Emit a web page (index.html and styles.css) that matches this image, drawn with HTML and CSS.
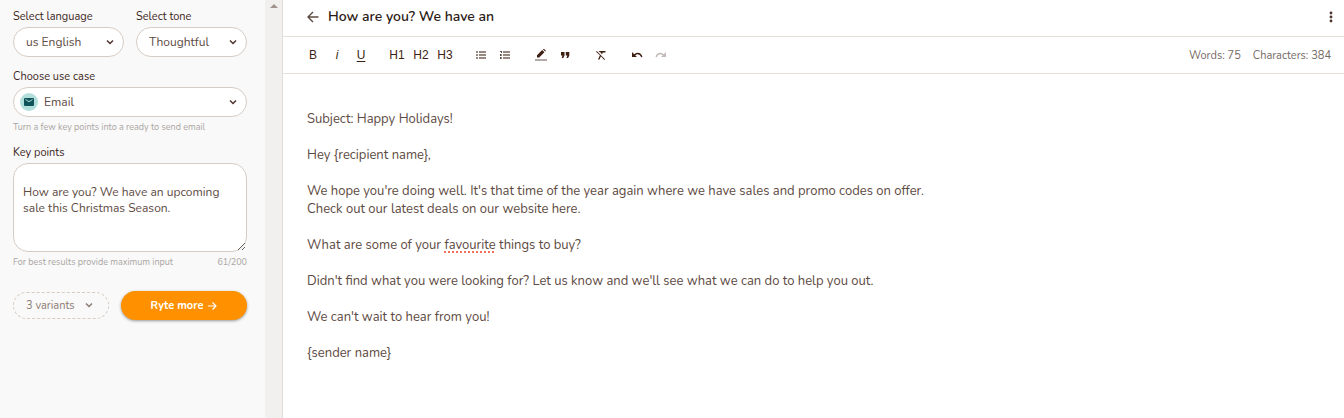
FILE: index.html
```
<!DOCTYPE html>
<html lang="en">
<head>
  <meta charset="UTF-8">
  <meta name="viewport" content="width=device-width, initial-scale=1">
  <title>How are you? We have an</title>
  <link rel="stylesheet" href="styles.css">
</head>
<body>

  <div class="app">
    <aside class="sidebar">
      <form class="panel">
        <div class="row">
          <div class="field">
            <label for="language">Select language</label>
            <div class="select-box">
              <select id="language"><option>us English</option></select>
              <svg class="chevron" viewBox="0 0 8 8"><path d="M1 2.5l3 3 3-3"/></svg>
            </div>
          </div>
          <div class="field">
            <label for="tone">Select tone</label>
            <div class="select-box">
              <select id="tone"><option>Thoughtful</option></select>
              <svg class="chevron" viewBox="0 0 8 8"><path d="M1 2.5l3 3 3-3"/></svg>
            </div>
          </div>
        </div>

        <div class="field">
          <label for="usecase">Choose use case</label>
          <div class="select-box with-icon">
            <svg class="mail" viewBox="0 0 18 18">
              <circle cx="9" cy="9" r="9" fill="#b2dfdb"/>
              <rect x="4" y="5" width="10" height="8" rx="1" fill="#0f5257"/>
              <path d="M5.5 6.5L9 8.7l3.5-2.2" fill="none" stroke="#b2dfdb"/>
            </svg>
            <select id="usecase"><option>Email</option></select>
            <svg class="chevron" viewBox="0 0 8 8"><path d="M1 2.5l3 3 3-3"/></svg>
          </div>
          <p class="hint">Turn a few key points into a ready to send email</p>
        </div>

        <div class="field">
          <label for="points">Key points</label>
          <textarea id="points" spellcheck="false">How are you? We have an upcoming sale this Christmas Season.</textarea>
          <p class="hint"><span>For best results provide maximum input</span><span>61/200</span></p>
        </div>

        <div class="actions">
          <div class="select-box variants">
            <select aria-label="Variants"><option>3 variants</option></select>
            <svg class="chevron" viewBox="0 0 8 8"><path d="M1 2.5l3 3 3-3"/></svg>
          </div>
          <button type="button" class="ryte">Ryte more
            <svg viewBox="0 0 10 10"><path d="M1 5h8M5.5 1.5L9 5 5.5 8.5"/></svg>
          </button>
        </div>
      </form>
      <div class="scrollbar"><span class="scroll-up"></span></div>
    </aside>

    <main class="document">
      <header class="doc-header">
        <button class="back" aria-label="Back">
          <svg viewBox="0 0 12 12"><path d="M11.5 6H1.5M6 1L1 6l5 5"/></svg>
        </button>
        <h1>How are you? We have an</h1>
        <button class="more" aria-label="More">
          <svg viewBox="0 0 4 12"><circle cx="2" cy="2" r="1.4"/><circle cx="2" cy="6" r="1.4"/><circle cx="2" cy="10" r="1.4"/></svg>
        </button>
      </header>

      <div class="toolbar">
        <div class="group">
          <button class="bold">B</button>
          <button class="italic">i</button>
          <button class="underline">U</button>
        </div>
        <div class="group">
          <button>H1</button>
          <button>H2</button>
          <button>H3</button>
        </div>
        <div class="group">
          <button aria-label="Bulleted list">
            <svg class="list" viewBox="0 0 12 12"><path d="M1 3h2M1 6h2M1 9h2M4 3h7M4 6h7M4 9h7"/></svg>
          </button>
          <button aria-label="Numbered list">
            <svg class="list" viewBox="0 0 12 12"><path d="M4 3h7M4 6h7M4 9h7M1 6h2M1 9h2"/><path class="dark" d="M1 2.5h1M2.5 2v2M1.500 5v2M1.500 8v2"/></svg>
          </button>
        </div>
        <div class="group">
          <button aria-label="Highlight">
            <svg viewBox="0 0 12 12"><path d="M2 8.5V6.3L7.2 1.1l2.2 2.2L4.200 8.500zM8 .4l.4-.4q.4-.4.8 0l1.400 1.400q.4.4 0 .8l-.4.4z"/><path class="swatch" d="M0 10h12v2H0z"/></svg>
          </button>
          <button aria-label="Quote">
            <svg viewBox="0 0 12 12"><path d="M2 3h3.500v3.500L4.300 9H2.700L3.500 6.500H2zM6.800 3h3.500v3.500L9.100 9H7.500l.8-2.500H6.800z"/></svg>
          </button>
        </div>
        <div class="group">
          <button aria-label="Clear formatting">
            <svg viewBox="0 0 12 12"><path d="M3.5 2h7v1.500H7.800L7 5.300 5.900 4.200l.3-.7H5.200zM1.700 2L10 10.300l-.7.700-3.400-3.700L4.500 10.500H3L4.900 6.300 1 2.700z"/></svg>
          </button>
        </div>
        <div class="group">
          <button aria-label="Undo">
            <svg viewBox="0 0 12 12"><path d="M1 3v5h5L4.200 6.200Q8 3.500 10.300 8.300l1.200-.4Q9 1.500 3.200 5.200z"/></svg>
          </button>
          <button aria-label="Redo" disabled>
            <svg viewBox="0 0 12 12"><path d="M11 3v5H6l1.800-1.800Q4 3.500 1.700 8.300L.5 7.900Q3 1.500 8.800 5.200z"/></svg>
          </button>
        </div>
        <div class="counts"><span>Words: 75</span><span>Characters: 384</span></div>
      </div>

      <article class="editor" contenteditable="true" spellcheck="false">
        <p>Subject: Happy Holidays!</p>
        <p>Hey {recipient name},</p>
        <p>We hope you're doing well. It's that time of the year again where we have sales and promo codes on offer.<br>Check out our latest deals on our website here.</p>
        <p>What are some of your <span class="misspelled">favourite</span> things to buy?</p>
        <p>Didn't find what you were looking for? Let us know and we'll see what we can do to help you out.</p>
        <p>We can't wait to hear from you!</p>
        <p>{sender name}</p>
      </article>
    </main>
  </div>

</body>
</html>
```
FILE: styles.css
```
* {
  box-sizing: border-box;
}

body {
  margin: 0;
  font-family: Nunito, "Open Sans", sans-serif;
  font-size: 12px;
  color: #5d4a42;
  background-color: #fff;
}

button,
select,
textarea {
  font: inherit;
  color: inherit;
}

button {
  border: none;
  padding: 0;
  background: none;
  cursor: pointer;
}

h1,
p {
  margin: 0;
}

.app {
  display: flex;
  min-height: 100vh;
}

/* sidebar */
.sidebar {
  display: flex;
  width: 283px;
  flex-shrink: 0;
  background-color: #f9f9f9;
  border-right: 1px solid #e0dcd8;
}

.panel {
  flex: 1;
  display: flex;
  flex-direction: column;
  gap: 10px;
  padding: 9px 18px 8px 13px;
}

.row {
  display: grid;
  grid-template-columns: 1fr 1fr;
  gap: 12px;
  margin-bottom: 2px;
}

label {
  display: block;
  font-size: 11px;
  line-height: 16px;
  margin-bottom: 2px;
  color: #3e2723;
}

.select-box {
  position: relative;
}

.select-box select {
  display: block;
  width: 100%;
  height: 30px;
  padding: 0 24px 0 12px;
  border: 1px solid #d7ccc3;
  border-radius: 15px;
  background-color: #fff;
  appearance: none;
}

.with-icon select {
  padding-left: 30px;
}

.chevron {
  position: absolute;
  right: 10px;
  top: 11px;
  width: 8px;
  height: 8px;
  fill: none;
  stroke: #4e342e;
  stroke-width: 1.5;
  pointer-events: none;
}

.mail {
  position: absolute;
  left: 7px;
  top: 6px;
  width: 18px;
  height: 18px;
}

.hint {
  display: flex;
  justify-content: space-between;
  margin-top: 2px;
  font-size: 9px;
  line-height: 16px;
  color: #aaa5a2;
}

textarea {
  display: block;
  width: 100%;
  height: 89px;
  padding: 20px 9px;
  line-height: 16px;
  border: 1px solid #d7ccc3;
  border-radius: 15px;
  background-color: #fff;
}

.actions {
  display: flex;
  align-items: center;
  gap: 12px;
  margin-top: 11px;
}

.variants {
  width: 96px;
}

.variants select {
  height: 27px;
  font-size: 11px;
  color: #8d7b74;
  background-color: transparent;
  border-style: dashed;
}

.variants .chevron {
  right: 16px;
  top: 9px;
  stroke: #8d7b74;
}

.ryte {
  flex: 1;
  display: flex;
  align-items: center;
  justify-content: center;
  gap: 4px;
  height: 29px;
  border-radius: 15px;
  background-color: #ff9100;
  color: #fff;
  font-size: 11px;
  font-weight: 700;
  box-shadow: 0 1px 3px rgba(0, 0, 0, 0.4);
}

.ryte svg {
  width: 10px;
  height: 10px;
  fill: none;
  stroke: #fff;
  stroke-width: 1.2;
}

.scrollbar {
  width: 17px;
  background-color: #f1f0ef;
}

.scroll-up {
  display: block;
  width: 8px;
  margin: 4px auto 0;
  border: 4px solid transparent;
  border-top: none;
  border-bottom-color: #a1938d;
}

/* document */
.document {
  flex: 1;
  min-width: 0;
}

.doc-header {
  display: flex;
  align-items: center;
  height: 37px;
  padding: 0 11px 2px 24px;
  border-bottom: 1px solid #e6e0da;
}

.doc-header h1 {
  flex: 1;
  margin-left: 9px;
  font-size: 14px;
  font-weight: 600;
  line-height: 18px;
  color: #2b1a15;
}

.back,
.more {
  display: flex;
}

.back svg {
  width: 12px;
  height: 12px;
  fill: none;
  stroke: #5d4a42;
  stroke-width: 1.4;
}

.more svg {
  width: 4px;
  height: 12px;
  fill: #4e342e;
}

.toolbar {
  display: flex;
  align-items: center;
  gap: 12px;
  height: 37px;
  padding: 0 13px 0 18px;
  border-bottom: 1px solid #e6e0da;
}

.group {
  display: flex;
}

.toolbar button {
  display: flex;
  align-items: center;
  justify-content: center;
  width: 24px;
  height: 24px;
  font-family: "Liberation Sans", Arial, sans-serif;
  font-size: 12px;
  color: #3e1f14;
}

.toolbar svg {
  width: 12px;
  height: 12px;
  fill: #3e1f14;
}

.toolbar .list {
  fill: none;
  stroke: #988a83;
  stroke-width: 2;
}

.toolbar .dark {
  stroke: #5d4a42;
  stroke-width: 1;
}

.toolbar .swatch {
  fill: #b3aaa5;
}

.toolbar button:disabled {
  opacity: 0.3;
}

.toolbar .bold {
  font-weight: 500;
}

.toolbar .italic {
  font-style: italic;
}

.toolbar .underline {
  text-decoration: underline;
  text-underline-offset: 2px;
}

.counts {
  display: flex;
  gap: 12px;
  margin-left: auto;
  font-size: 11px;
  color: #756a65;
}

.editor {
  padding: 36px 24px;
  font-size: 13px;
  line-height: 18px;
  outline: none;
}

.editor p {
  margin-bottom: 18px;
}

.misspelled {
  text-decoration: underline dotted #f0705a 2px;
  text-underline-offset: 2px;
}
```
